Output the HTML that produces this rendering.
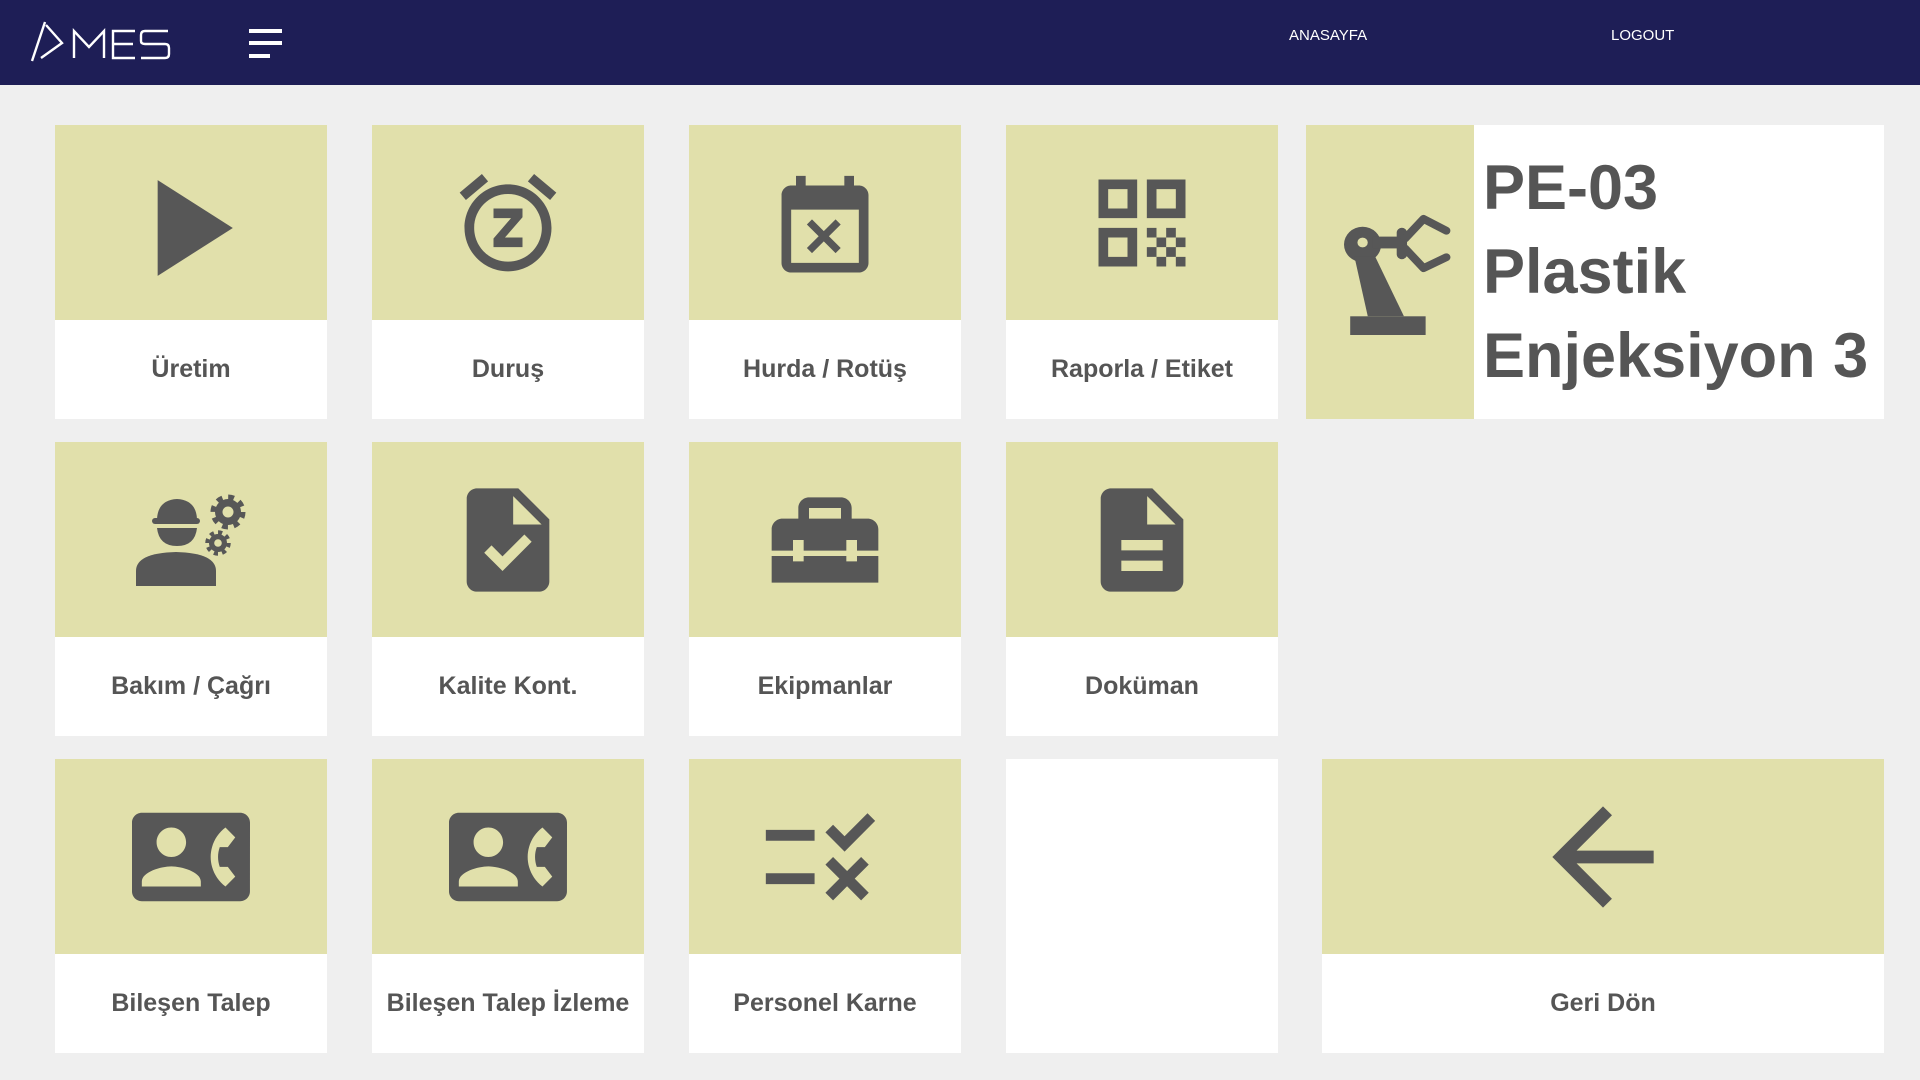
<!DOCTYPE html>
<html><head><meta charset="utf-8"><style>
*{margin:0;padding:0;box-sizing:border-box}
body{width:1920px;height:1080px;background:#efefef;font-family:"Liberation Sans",sans-serif;position:relative;overflow:hidden}
.hdr{position:absolute;left:0;top:0;width:1920px;height:85px;background:#1e1e56}
.nav{position:absolute;top:27px;color:#fff;font-size:15px}
.t{position:absolute;width:272px;height:294px;background:#fff}
.t .ic{height:195px;background:#e1e0ab;display:flex;align-items:center;justify-content:center}
.t .lb{height:99px;display:flex;align-items:center;justify-content:center;font-weight:bold;font-size:25px;color:#555}
svg.i{fill:#575757}
</style></head><body>
<div class="hdr">
<svg width="180" height="85" style="position:absolute;left:0;top:0" fill="none" stroke="#fff" stroke-width="2.4">
<path d="M32 61 L45 22 M46 25 L62 43 L41 58"/>
<path d="M74 58 V31 L89 47 L104 31 V58"/>
<path d="M135 31 H113 V58 H135 M113 44 H133"/>
<path d="M168 31 H145 Q141 31 141 35 V41 Q141 44 145 44 H165 Q169 44 169 48 V54 Q169 58 165 58 H141"/>
</svg>
<div style="position:absolute;left:249px;top:29px;width:33px;height:4px;background:#fff"></div>
<div style="position:absolute;left:249px;top:41px;width:33px;height:4px;background:#fff"></div>
<div style="position:absolute;left:249px;top:54px;width:21px;height:4px;background:#fff"></div>
<div class="nav" style="left:1289px">ANASAYFA</div>
<div class="nav" style="left:1611px">LOGOUT</div>
</div>

<div class="t" style="left:55px;top:125px"><div class="ic"><svg class="i" width="164" height="164" viewBox="0 0 24 24" style="margin:10px 12px 0 0"><path d="M8 5v14l11-7z"/></svg></div><div class="lb">Üretim</div></div>
<div class="t" style="left:372px;top:125px"><div class="ic"><svg class="i" width="116" height="116" viewBox="0 0 24 24"><path d="M7.88 3.39L6.6 1.86 2 5.71l1.29 1.53 4.59-3.85zM22 5.72l-4.6-3.86-1.29 1.53 4.6 3.86L22 5.72zM12 4c-4.97 0-9 4.030-9 9s4.02 9 9 9c4.97 0 9-4.03 9-9s-4.03-9-9-9zm0 16c-3.87 0-7-3.13-7-7s3.13-7 7-7 7 3.13 7 7-3.13 7-7 7zm-3-9h3.63L9 15.2V17h6v-2h-3.63L15 10.8V9H9v2z"/></svg></div><div class="lb">Duruş</div></div>
<div class="t" style="left:689px;top:125px"><div class="ic"><svg class="i" width="116" height="116" viewBox="0 0 24 24" style="margin-top:12px"><path d="M9.31 17l2.44-2.44L14.19 17l1.06-1.06-2.44-2.44 2.44-2.44L14.19 10l-2.44 2.44L9.31 10l-1.06 1.06 2.44 2.44-2.44 2.44L9.31 17zM19 3h-1V1h-2v2H8V1H6v2H5c-1.11 0-1.99.9-1.99 2L3 19c0 1.1.89 2 2 2h14c1.1 0 2-.9 2-2V5c0-1.1-.9-2-2-2zm0 16H5V8h14v11z"/></svg></div><div class="lb">Hurda / Rotüş</div></div>
<div class="t" style="left:1006px;top:125px"><div class="ic"><svg class="i" width="116" height="116" viewBox="0 0 24 24"><path d="M3 11h8V3H3v8zm2-6h4v4H5V5zM3 21h8v-8H3v8zm2-6h4v4H5v-4zM13 3v8h8V3h-8zm6 6h-4V5h4v4zM19 19h2v2h-2zM13 13h2v2h-2zM15 15h2v2h-2zM13 17h2v2h-2zM15 19h2v2h-2zM17 17h2v2h-2zM17 13h2v2h-2zM19 15h2v2h-2z"/></svg></div><div class="lb">Raporla / Etiket</div></div>

<div style="position:absolute;left:1306px;top:125px;width:578px;height:294px;background:#fff;display:flex">
<div style="width:168px;height:294px;background:#e1e0ab;display:flex;align-items:center;justify-content:center">
<svg class="i" width="124" height="122" viewBox="0 0 120 124" preserveAspectRatio="none" style="margin:4px 0 0 32px">
<circle cx="18" cy="32" r="18"/>
<path d="M10 44 L30 44 L58 105 L23 105 Z"/>
<rect x="6" y="105" width="73" height="19"/>
<rect x="28" y="24" width="30" height="12"/>
<rect x="51" y="15" width="10" height="32" rx="5"/>
<path d="M59 26 L77 6 L99 18" fill="none" stroke="#575757" stroke-width="8" stroke-linecap="round" stroke-linejoin="round"/>
<path d="M59 36 L77 56 L99 45" fill="none" stroke="#575757" stroke-width="8" stroke-linecap="round" stroke-linejoin="round"/>
<circle cx="18" cy="30" r="5" fill="#e1e0ab"/>
</svg></div>
<div style="padding-left:9px;display:flex;flex-direction:column;justify-content:center;font-weight:bold;font-size:63px;line-height:84px;color:#555;white-space:nowrap">
<div>PE-03</div><div>Plastik</div><div>Enjeksiyon 3</div></div>
</div>

<div class="t" style="left:55px;top:442px"><div class="ic"><svg class="i" width="272" height="195" viewBox="55 442 272 195">
<path d="M136 586 V571 Q136 553 176 552 Q216 553 216 571 V586 Z"/>
<path d="M157 519 Q158 500 177 499 Q196 500 197 519 Z"/>
<rect x="152" y="518" width="48" height="6" rx="3"/>
<path d="M157 528 H197 Q195 546 177 546 Q159 546 157 528 Z"/>
<circle cx="228" cy="512" r="14.5" fill="none" stroke="#575757" stroke-width="6" stroke-dasharray="5.7 5.7"/>
<circle cx="228" cy="512" r="13"/>
<circle cx="228" cy="512" r="5.5" fill="#e1e0ab"/>
<circle cx="218" cy="543" r="10.5" fill="none" stroke="#575757" stroke-width="4.5" stroke-dasharray="4.1 4.1"/>
<circle cx="218" cy="543" r="9"/>
<circle cx="218" cy="543" r="3.8" fill="#e1e0ab"/>
</svg></div><div class="lb">Bakım / Çağrı</div></div>
<div class="t" style="left:372px;top:442px"><div class="ic"><svg class="i" width="124" height="124" viewBox="0 0 24 24"><path d="M14 2H6c-1.1 0-1.99.9-1.99 2L4 20c0 1.1.89 2 1.99 2H18c1.1 0 2-.9 2-2V8l-6-6zm-3.06 16L7.4 14.46l1.41-1.41 2.12 2.12 4.24-4.24 1.41 1.41L10.94 18zM13 9V3.5L18.5 9H13z"/></svg></div><div class="lb">Kalite Kont.</div></div>
<div class="t" style="left:689px;top:442px"><div class="ic"><svg class="i" width="128" height="128" viewBox="0 0 24 24"><path d="M18 16h-2v-1H8v1H6v-1H2v5h20v-5h-4zm2-8h-3V6c0-1.1-.9-2-2-2H9c-1.1 0-2 .9-2 2v2H4c-1.1 0-2 .9-2 2v4h4v-2h2v2h8v-2h2v2h4v-4c0-1.1-.9-2-2-2zm-5 0H9V6h6v2z"/></svg></div><div class="lb">Ekipmanlar</div></div>
<div class="t" style="left:1006px;top:442px"><div class="ic"><svg class="i" width="124" height="124" viewBox="0 0 24 24"><path d="M14 2H6c-1.1 0-1.99.9-1.99 2L4 20c0 1.1.89 2 1.99 2H18c1.1 0 2-.9 2-2V8l-6-6zm2 16H8v-2h8v2zm0-4H8v-2h8v2zm-3-5V3.5L18.5 9H13z"/></svg></div><div class="lb">Doküman</div></div>

<div class="t" style="left:55px;top:759px"><div class="ic"><svg class="i" width="118" height="118" viewBox="0 0 24 24"><path d="M22 3H2C.9 3 0 3.9 0 5v14c0 1.1.9 2 2 2h20c1.1 0 1.99-.9 1.99-2L24 5c0-1.1-.9-2-2-2zM8 6c1.66 0 3 1.34 3 3s-1.34 3-3 3-3-1.34-3-3 1.34-3 3-3zm6 12H2v-1c0-2 4-3.1 6-3.1s6 1.1 6 3.1v1zm3.85-4h1.64L21 16l-1.99 1.99c-1.31-.98-2.28-2.38-2.73-3.99-.18-.64-.28-1.31-.28-2s.1-1.36.28-2c.45-1.62 1.42-3.01 2.73-3.99L21 8l-1.51 2h-1.64c-.22.63-.35 1.3-.35 2s.13 1.37.35 2z"/></svg></div><div class="lb">Bileşen Talep</div></div>
<div class="t" style="left:372px;top:759px"><div class="ic"><svg class="i" width="118" height="118" viewBox="0 0 24 24"><path d="M22 3H2C.9 3 0 3.9 0 5v14c0 1.1.9 2 2 2h20c1.1 0 1.99-.9 1.99-2L24 5c0-1.1-.9-2-2-2zM8 6c1.66 0 3 1.34 3 3s-1.34 3-3 3-3-1.34-3-3 1.34-3 3-3zm6 12H2v-1c0-2 4-3.1 6-3.1s6 1.1 6 3.1v1zm3.85-4h1.64L21 16l-1.99 1.99c-1.31-.98-2.28-2.38-2.73-3.99-.18-.64-.28-1.31-.28-2s.1-1.36.28-2c.45-1.62 1.42-3.01 2.73-3.99L21 8l-1.51 2h-1.64c-.22.63-.35 1.3-.35 2s.13 1.37.35 2z"/></svg></div><div class="lb">Bileşen Talep İzleme</div></div>
<div class="t" style="left:689px;top:759px"><div class="ic"><svg class="i" width="130" height="130" viewBox="0 0 24 24" style="margin-right:10px"><path d="M16.54 11L13 7.46l1.41-1.41 2.12 2.12 4.24-4.24 1.41 1.41L16.54 11zM11 7H2v2h9V7zm10 6.41L19.59 12 17 14.59 14.41 12 13 13.41 15.59 16 13 18.59 14.41 20 17 17.41 19.59 20 21 18.59 18.41 16 21 13.41zM11 15H2v2h9v-2z"/></svg></div><div class="lb">Personel Karne</div></div>
<div class="t" style="left:1006px;top:759px"></div>
<div class="t" style="left:1322px;top:759px;width:562px"><div class="ic"><svg class="i" width="152" height="152" viewBox="0 0 24 24"><path d="M20 11H7.83l5.59-5.59L12 4l-8 8 8 8 1.41-1.41L7.83 13H20v-2z"/></svg></div><div class="lb">Geri Dön</div></div>
</body></html>
